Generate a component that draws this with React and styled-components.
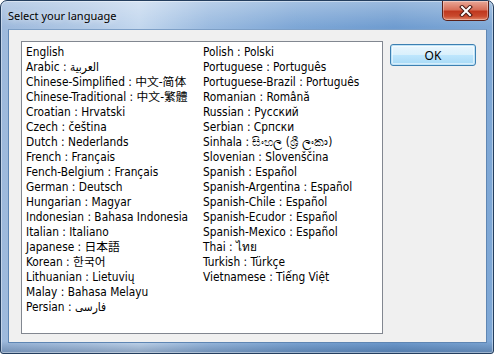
import styled, { createGlobalStyle } from "styled-components";

const GlobalStyle = createGlobalStyle`
  html, body {
    margin: 0;
    padding: 0;
    background: #ffffff;
  }
  * {
    box-sizing: border-box;
  }
`;

const languages = [
  "English",
  "Arabic : العربية",
  "Chinese-Simplified : 中文-简体",
  "Chinese-Traditional : 中文-繁體",
  "Croatian : Hrvatski",
  "Czech : čeština",
  "Dutch : Nederlands",
  "French : Français",
  "Fench-Belgium : Français",
  "German : Deutsch",
  "Hungarian : Magyar",
  "Indonesian : Bahasa Indonesia",
  "Italian : Italiano",
  "Japanese : 日本語",
  "Korean : 한국어",
  "Lithuanian : Lietuvių",
  "Malay : Bahasa Melayu",
  "Persian : فارسی",
  "Polish : Polski",
  "Portuguese : Português",
  "Portuguese-Brazil : Português",
  "Romanian : Română",
  "Russian : Русский",
  "Serbian : Српски",
  "Sinhala : සිංහල (ශ්‍රී ලංකා)",
  "Slovenian : Slovenščina",
  "Spanish : Español",
  "Spanish-Argentina : Español",
  "Spanish-Chile : Español",
  "Spanish-Ecudor : Español",
  "Spanish-Mexico : Español",
  "Thai : ไทย",
  "Turkish : Türkçe",
  "Vietnamese : Tiếng Việt",
];

const Window = styled.div`
  width: 494px;
  height: 354px;
  display: flex;
  flex-direction: column;
  padding: 0 6px 10px 7px;
  border: 1px solid #243e5e;
  border-radius: 7px 7px 3px 3px;
  background:
    linear-gradient(to bottom, rgba(255, 255, 255, 0.3), rgba(255, 255, 255, 0) 26px),
    linear-gradient(to bottom, rgba(0, 0, 0, 0) 340px, rgba(30, 60, 100, 0.35) 352px),
    linear-gradient(to right, #9db9dc 0%, #b3cae6 18%, #c3d7ee 28%, #9bbbe0 42%, #7ea7d6 60%, #6f9cd0 80%, #7fa8d6 100%);
  box-shadow: inset 0 0 0 1px rgba(255, 255, 255, 0.4);
`;

const TitleBar = styled.div`
  height: 28px;
  display: flex;
  justify-content: space-between;
  align-items: flex-start;
`;

const Title = styled.span`
  margin-top: 7px;
  font-family: "Noto Sans", "Open Sans", sans-serif;
  font-size: 11px;
  color: #000;
  text-shadow: 0 0 6px rgba(255, 255, 255, 0.9);
`;

const CloseButton = styled.div`
  width: 47px;
  height: 20px;
  margin-right: -2px;
  display: flex;
  align-items: center;
  justify-content: center;
  border: 1px solid #5a2019;
  border-top: none;
  border-radius: 0 0 5px 5px;
  background: linear-gradient(
    to bottom,
    #e9a898 0%,
    #d8705a 45%,
    #c0381f 55%,
    #c94a2e 80%,
    #e0876a 100%
  );
  box-shadow: inset 0 0 0 1px rgba(255, 255, 255, 0.35);
`;

const Client = styled.div`
  flex: 1;
  display: flex;
  align-items: flex-start;
  gap: 7px;
  padding: 11px 0 0 12px;
  background: #f0f0f0;
  border: 1px solid #5f86b3;
  border-top-color: #7d9fc6;
`;

const ListBox = styled.div`
  width: 362px;
  height: 293px;
  padding: 3px 0 0 4px;
  border: 1px solid #828790;
  background: #ffffff;
  display: grid;
  grid-template-rows: repeat(18, 15px);
  grid-auto-flow: column;
  grid-auto-columns: 177px;
  font-family: "DejaVu Sans Condensed", "Liberation Sans", "Noto Sans CJK SC", sans-serif;
  font-size: 11.8px;
  color: #000;
`;

const Item = styled.div`
  line-height: 15px;
  white-space: nowrap;
  font-family: ${(p) =>
    p.cjk
      ? `"DejaVu Sans Condensed", "Liberation Sans", "Noto Sans CJK ${p.cjk}", sans-serif`
      : "inherit"};
`;

const Button = styled.button`
  width: 86px;
  height: 22px;
  margin-top: 3px;
  padding: 0;
  border: 1px solid #3c7fb1;
  border-radius: 3px;
  background: linear-gradient(to bottom, #eaf6fd 0%, #d9f0fc 50%, #bee6fd 51%, #a7d9f5 100%);
  box-shadow: inset 0 0 0 1px #bfe3f7, inset 0 0 0 2px rgba(255, 255, 255, 0.5);
  font-family: "Noto Sans", "Open Sans", sans-serif;
  font-size: 12px;
  color: #000;
`;

const cjkFor = (label) => {
  if (label.startsWith("Chinese-Simplified")) return "SC";
  if (label.startsWith("Chinese-Traditional")) return "TC";
  if (label.startsWith("Japanese")) return "JP";
  if (label.startsWith("Korean")) return "KR";
  return null;
};

const App = () => {
  return (
    <>
      <GlobalStyle />
      <Window>
        <TitleBar>
          <Title>Select your language</Title>
          <CloseButton>
            <svg width="14" height="12" viewBox="0 0 14 12">
              <path d="M3 2 L11 10 M11 2 L3 10" stroke="#4a1a14" strokeWidth="4" strokeLinecap="square" />
              <path d="M3 2 L11 10 M11 2 L3 10" stroke="#ffffff" strokeWidth="2" strokeLinecap="square" />
            </svg>
          </CloseButton>
        </TitleBar>
        <Client>
          <ListBox>
            {languages.map((label) => (
              <Item key={label} cjk={cjkFor(label)}>
                {label}
              </Item>
            ))}
          </ListBox>
          <Button>OK</Button>
        </Client>
      </Window>
    </>
  );
};

export default App;
